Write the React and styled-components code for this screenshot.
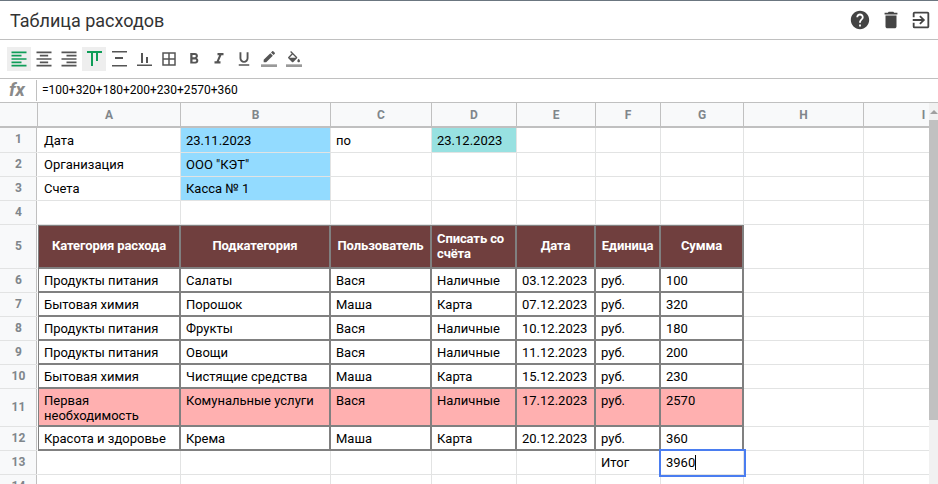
import React from 'react';
import styled, { createGlobalStyle } from 'styled-components';
import {
  MdFormatAlignLeft, MdFormatAlignCenter, MdFormatAlignRight,
  MdBorderAll, MdFormatBold, MdFormatItalic, MdFormatUnderlined,
  MdHelp, MdDelete, MdOutlineExitToApp,
} from 'react-icons/md';

const GlobalStyle = createGlobalStyle`
  html, body { margin: 0; padding: 0; background: #fff; }
  body { font-family: Roboto, "Liberation Sans", sans-serif; overflow: hidden; }
`;

const Page = styled.div`
  width: 938px;
  height: 484px;
  display: flex;
  flex-direction: column;
  overflow: hidden;
  border-top: 1px solid #6b7680;
  box-sizing: border-box;
`;

const Header = styled.div`
  height: 38px;
  flex: none;
  display: flex;
  align-items: center;
  justify-content: space-between;
  padding: 0 5px 0 10px;
  border-bottom: 1px solid #c0c0c0;
`;

const Title = styled.h1`
  margin: 0;
  font-size: 18px;
  font-weight: 400;
  color: #333;
`;

const HeaderIcons = styled.div`
  display: flex;
  gap: 6px;
`;

const HeaderIcon = styled.span`
  width: 24px;
  height: 24px;
  display: flex;
  align-items: center;
  justify-content: center;
  font-size: 22px;
  color: #444;
  &:first-child { margin-right: 1px; }
`;

const Toolbar = styled.div`
  height: 38px;
  flex: none;
  display: flex;
  align-items: center;
  gap: 1px;
  padding-left: 7px;
  border-bottom: 1px solid #c0c0c0;
`;

const ToolButton = styled.span`
  width: 24px;
  height: 24px;
  display: flex;
  align-items: center;
  justify-content: center;
  font-size: ${p => p.$size || 18}px;
  color: ${p => (p.$active ? '#0f9d58' : '#555')};
  background: ${p => (p.$active ? '#eeeeee' : 'transparent')};
`;

const FormulaBar = styled.div`
  height: 23px;
  flex: none;
  display: flex;
  align-items: center;
  border-bottom: 1px solid #c0c0c0;
`;

const FxLabel = styled.div`
  width: 36px;
  height: 100%;
  flex: none;
  box-sizing: border-box;
  padding-left: 9px;
  font-size: 19px;
  line-height: 21px;
  font-weight: 700;
  font-style: italic;
  color: #8a8a8a;
`;

const FormulaText = styled.div`
  flex: 1;
  height: 21px;
  border-left: 1px solid #c0c0c0;
  padding-left: 5px;
  font-size: 12px;
  line-height: 21px;
  color: #000;
`;

const SheetArea = styled.div`
  flex: 1;
  min-height: 0;
  display: flex;
`;

const GridClip = styled.div`
  flex: 1;
  min-width: 0;
  overflow: hidden;
`;

const SheetGrid = styled.div`
  display: grid;
  width: max-content;
  grid-template-columns: 38px 143px 150px 101px 85px 79px 65px 83px 120px 120px;
  grid-template-rows: 25px 25px 24px 24px 24px 44px 24px 24px 24px 24px 24px 38px 24px 24px 24px;
`;

const Scrollbar = styled.div`
  width: 9px;
  flex: none;
  display: flex;
  flex-direction: column;
  background: #f1f1f1;
`;

const ScrollArrow = styled.div`
  height: 17px;
  flex: none;
  display: flex;
  align-items: center;
  justify-content: center;
  &::before {
    content: '';
    border-left: 4px solid transparent;
    border-right: 4px solid transparent;
    border-bottom: 4px solid #a0a0a0;
  }
`;

const ScrollThumb = styled.div`
  height: 300px;
  background: #c1c1c1;
`;

const Corner = styled.div`
  background: #f8f9fa;
  box-sizing: border-box;
  border-right: 1px solid #c0c0c0;
  border-bottom: 2px solid #c0c0c0;
`;

const ColHead = styled.div`
  background: #f8f9fa;
  box-sizing: border-box;
  border-right: 1px solid #c0c0c0;
  border-bottom: 2px solid #c0c0c0;
  display: flex;
  align-items: center;
  justify-content: center;
  font-size: 12px;
  font-weight: 700;
  color: #80868b;
`;

const RowHead = styled.div`
  background: #f8f9fa;
  box-sizing: border-box;
  border-right: 1px solid #fff;
  box-shadow: inset -1px 0 #c0c0c0;
  border-bottom: 1px solid #e2e3e3;
  padding-bottom: 2px;
  display: flex;
  align-items: center;
  justify-content: center;
  font-size: 12px;
  font-weight: 700;
  color: #80868b;
`;

const Cell = styled.div`
  box-sizing: border-box;
  padding: 0 5px 0 ${p => (p.$first ? 6 : 5)}px;
  border-right: 1px solid #e2e3e3;
  border-bottom: 1px solid #e2e3e3;
  font-size: 13px;
  line-height: 15px;
  color: #000;
  white-space: pre-line;
  display: flex;
  align-items: ${p => (p.$top ? 'flex-start' : 'center')};
  background: ${p => p.$bg || '#fff'};
`;

const BoxCell = styled(Cell)`
  padding-top: ${p => (p.$top ? 4 : 1)}px;
  border-right: 2px solid #808080;
  border-bottom: 2px solid #808080;
  ${p => p.$first && 'border-left: 1px solid #808080; padding-left: 5px;'}
`;

const HeadCell = styled(BoxCell)`
  background: #703f3e;
  color: #fff;
  font-weight: 700;
  letter-spacing: -0.1px;
  padding-top: 0;
  padding-bottom: 2px;
  border-top: 1px solid #808080;
  justify-content: ${p => (p.$left ? 'flex-start' : 'center')};
  text-align: ${p => (p.$left ? 'left' : 'center')};
`;

const ActiveCell = styled(Cell)`
  position: relative;
  z-index: 1;
  outline: 2px solid #4a7df0;
  outline-offset: 0;
`;

const Caret = styled.span`
  display: inline-block;
  width: 1px;
  height: 15px;
  background: #000;
`;

// vertical align glyphs, the pack's arrows don't match these
const VAlignTop = () => (
  <svg width="24" height="24" viewBox="0 0 24 24" fill="currentColor">
    <rect x="5" y="4" width="15" height="2" />
    <rect x="9" y="6" width="2" height="13" />
    <rect x="14" y="6" width="2" height="8" />
  </svg>
);

const VAlignMiddle = () => (
  <svg width="24" height="24" viewBox="0 0 24 24" fill="currentColor">
    <rect x="5" y="4" width="15" height="1.5" />
    <rect x="8" y="10" width="8" height="2" />
    <rect x="5" y="18" width="15" height="1.5" />
  </svg>
);

const VAlignBottom = () => (
  <svg width="24" height="24" viewBox="0 0 24 24" fill="currentColor">
    <rect x="9" y="6" width="2" height="10" />
    <rect x="14" y="10" width="2" height="6" />
    <rect x="5" y="17.5" width="15" height="1.5" />
  </svg>
);

const PencilBar = () => (
  <svg width="16" height="16" viewBox="0 0 24 24" fill="currentColor">
    <path d="M17.75 7L14 3.25l-10 10V17h3.75l10-10zm2.96-2.96c.39-.39.39-1.02 0-1.41L18.37.29c-.39-.39-1.02-.39-1.41 0L15 2.25 18.75 6l1.96-1.96z" />
    <rect y="20" width="24" height="4" fill="#999" />
  </svg>
);

const BucketBar = () => (
  <svg width="16" height="16" viewBox="0 0 24 24" fill="currentColor">
    <path d="M16.56 8.94L7.62 0 6.21 1.41l2.38 2.38-5.15 5.15c-.59.59-.59 1.54 0 2.12l5.5 5.5c.29.29.68.44 1.06.44s.77-.15 1.06-.44l5.5-5.5c.59-.58.59-1.53 0-2.12zM5.21 10L10 5.21 14.79 10H5.21zM19 11.5s-2 2.17-2 3.5c0 1.1.9 2 2 2s2-.9 2-2c0-1.33-2-3.5-2-3.5z" />
    <rect y="20" width="24" height="4" fill="#999" />
  </svg>
);

const BLUE = '#93dbff';
const TEAL = '#98e1e1';
const PINK = '#ffb0b0';
const COLS = ['A', 'B', 'C', 'D', 'E', 'F', 'G', 'H', 'I'];

const TOOLS = [
  { Icon: MdFormatAlignLeft, active: true, size: 20 },
  { Icon: MdFormatAlignCenter, size: 20 },
  { Icon: MdFormatAlignRight, size: 20 },
  { Icon: VAlignTop, active: true },
  { Icon: VAlignMiddle },
  { Icon: VAlignBottom },
  { Icon: MdBorderAll },
  { Icon: MdFormatBold },
  { Icon: MdFormatItalic },
  { Icon: MdFormatUnderlined },
  { Icon: PencilBar },
  { Icon: BucketBar },
];

const HEADS = ['Категория расхода', 'Подкатегория', 'Пользователь', 'Списать со счёта', 'Дата', 'Единица', 'Сумма'];

const EXPENSES = [
  ['Продукты питания', 'Салаты', 'Вася', 'Наличные', '03.12.2023', 'руб.', '100'],
  ['Бытовая химия', 'Порошок', 'Маша', 'Карта', '07.12.2023', 'руб.', '320'],
  ['Продукты питания', 'Фрукты', 'Вася', 'Наличные', '10.12.2023', 'руб.', '180'],
  ['Продукты питания', 'Овощи', 'Вася', 'Наличные', '11.12.2023', 'руб.', '200'],
  ['Бытовая химия', 'Чистящие средства', 'Маша', 'Карта', '15.12.2023', 'руб.', '230'],
  ['Первая\nнеобходимость', 'Комунальные услуги', 'Вася', 'Наличные', '17.12.2023', 'руб.', '2570'],
  ['Красота и здоровье', 'Крема', 'Маша', 'Карта', '20.12.2023', 'руб.', '360'],
];

const TOP_ROWS = [
  ['Дата', '23.11.2023', 'по', '23.12.2023'],
  ['Организация', 'ООО "КЭТ"'],
  ['Счета', 'Касса № 1'],
  [],
];

const blanks = (row, from) =>
  COLS.slice(from).map(c => <Cell key={row + c} />);

const App = () => (
  <Page>
    <GlobalStyle />
    <Header>
      <Title>Таблица расходов</Title>
      <HeaderIcons>
        <HeaderIcon><MdHelp /></HeaderIcon>
        <HeaderIcon><MdDelete /></HeaderIcon>
        <HeaderIcon><MdOutlineExitToApp /></HeaderIcon>
      </HeaderIcons>
    </Header>

    <Toolbar>
      {TOOLS.map(({ Icon, active, size }, i) => (
        <ToolButton key={i} $active={active} $size={size}><Icon /></ToolButton>
      ))}
    </Toolbar>

    <FormulaBar>
      <FxLabel>fx</FxLabel>
      <FormulaText>=100+320+180+200+230+2570+360</FormulaText>
    </FormulaBar>

    <SheetArea>
      <GridClip>
        <SheetGrid>
          <Corner />
          {COLS.map(c => <ColHead key={c}>{c}</ColHead>)}

          {TOP_ROWS.map((cells, r) => (
            <React.Fragment key={r}>
              <RowHead>{r + 1}</RowHead>
              {COLS.map((c, i) => (
                <Cell
                  key={c}
                  $first={i === 0}
                  $bg={i === 1 && r < 3 ? BLUE : i === 3 && r === 0 ? TEAL : undefined}
                >
                  {cells[i]}
                </Cell>
              ))}
            </React.Fragment>
          ))}

          <RowHead>5</RowHead>
          {HEADS.map((h, i) => <HeadCell key={h} $first={i === 0} $left={i === 3}>{h}</HeadCell>)}
          {blanks(5, 7)}

          {EXPENSES.map((cells, r) => (
            <React.Fragment key={r}>
              <RowHead>{r + 6}</RowHead>
              {cells.map((t, i) => (
                <BoxCell key={i} $first={i === 0} $top={r === 5} $bg={r === 5 ? PINK : undefined}>{t}</BoxCell>
              ))}
              {blanks(r + 6, 7)}
            </React.Fragment>
          ))}

          <RowHead>13</RowHead>
          {COLS.slice(0, 5).map(c => <Cell key={c} />)}
          <Cell>Итог</Cell>
          <ActiveCell>3960<Caret /></ActiveCell>
          {blanks(13, 7)}

          <RowHead>14</RowHead>
          {blanks(14, 0)}
        </SheetGrid>
      </GridClip>
      <Scrollbar>
        <ScrollArrow />
        <ScrollThumb />
      </Scrollbar>
    </SheetArea>
  </Page>
);

export default App;
